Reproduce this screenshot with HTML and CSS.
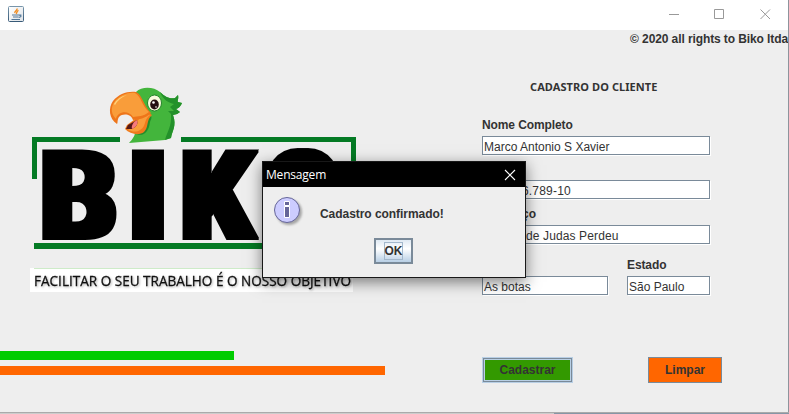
FILE: index.html
```html
<!DOCTYPE html>
<html lang="pt-BR">
<head>
<meta charset="utf-8">
<title>Biko</title>
<link rel="stylesheet" href="styles.css">
</head>
<body>
<main class="window">
  <header class="titlebar">
    <svg class="java" width="16" height="16" viewBox="0 0 16 16">
      <defs><linearGradient id="jb" x1="0" y1="0" x2="0" y2="1"><stop offset="0" stop-color="#7795ab"/><stop offset="1" stop-color="#385a78"/></linearGradient>
      <linearGradient id="jf" x1="0" y1="0" x2="1" y2="1"><stop offset="0" stop-color="#fff"/><stop offset="1" stop-color="#dfe3e7"/></linearGradient></defs>
      <rect x=".5" y=".5" width="15" height="15" rx="1" fill="url(#jf)" stroke="url(#jb)"/>
      <path d="M9.200 2.500C9.500 4.500 6.200 5 6.800 7M10.500 4.300C8.300 5.300 9.600 6.100 8 7.800" fill="none" stroke="#f08a1c" stroke-width="1.300"/>
      <path d="M4 9h7M5 11h5.500M3.500 13.500h8.500M11 9.200h1.800v1.500l-2 .8" fill="none" stroke="#54799a" stroke-width="1.200"/>
    </svg>
    <svg class="controls" width="102" height="12" viewBox="0 0 102 12" fill="none" stroke="#999">
      <path d="M0 6.500h10M45.500 1.500h9v9h-9zM91.500 1.500l9.500 9.500M101 1.500l-9.500 9.500"/>
    </svg>
  </header>
  <p class="copyright"><span>© 2020 all rights to Biko ltda</span></p>
  <div class="content">
    <section class="brand">
      <svg class="logo" width="385" height="300" viewBox="0 48 385 300">
        <defs>
          <filter id="heavy" filterUnits="userSpaceOnUse" x="20" y="130" width="350" height="130"><feMorphology operator="dilate" radius="5 1"/></filter>
        </defs>
        <g fill="#047a24">
          <path d="M32 137h88v5H37v37h-5zM181 137h175v112h-5V142H181zM34 243h322v6H34z"/>
        </g>
        <g class="wordmark" filter="url(#heavy)">
          <text transform="translate(41 239) scale(.940 1)">B</text>
          <text transform="translate(148 239) scale(1.040 1)" text-anchor="middle">I</text>
          <text transform="translate(181.500 239) scale(.900 1)">K</text>
          <text transform="translate(303 239) scale(.880 1)" text-anchor="middle">O</text>
        </g>
        <path d="M136 92C142 86 154 87 160 92C166 98 171 99 175 98L178 95C179 99 177 101 178 102L182 103Q180 108 176 109L180 112Q177 115 173 115C177 126 172 131 171 138L165 140L129 143Q135 137 135 132Z" fill="#43b53c"/>
        <path d="M160 92C166 98 171 99 175 98L178 95C179 99 177 101 178 102L182 103Q180 108 176 109L180 112Q177 115 173 115C177 126 172 131 171 138L165 140C167 132 172 126 171 114L168 111L174 111L170 107L174 104C169 103 163 100 160 92Z" fill="#23912a"/>
        <path d="M147 118C151 115 153 116 150 122C149 132 143 137 136 134Z" fill="#238c2b"/>
        <path d="M146 111L152 115C146 120 149 127 144 132C139 136 130 134 125 129L127 125Z" fill="#f07a1c"/>
        <path d="M146 113L150 115C143 120 147 126 140 130C136 133 131 131 128 130L137 121Z" fill="#f99d3a"/>
        <path d="M128 125L137 120Q139 126 132 129L126 129Z" fill="#541816"/>
        <path d="M134 122L137 120Q139 126 132 129Q131 126 134 122Z" fill="#f67a7b"/>
        <path d="M136 92C142 94 143 105 151 113C145 119 139 119 133 120C131 114 123 113 119 117C117 120 118 123 117 124C109 119 108 108 113 101C119 94 127 91 136 92Z" fill="#ee751a"/>
        <path d="M135 93C141 96 142 106 149 112C143 117 138 116 133 117C128 109 117 112 116 119C109 112 112 104 116 100C121 95 128 92 135 93Z" fill="#f99d3a"/>
        <path d="M114 104Q118 97 127 95Q119 98 115 105Z" fill="#ffd37b"/>
        <ellipse cx="154.500" cy="103" rx="7" ry="8" fill="#f9fbdc" stroke="#24842a"/>
        <ellipse cx="154.500" cy="104.500" rx="4.300" ry="5" fill="#251111"/>
        <circle cx="153.500" cy="102.500" r="1.300" fill="#fff"/><circle cx="156" cy="107" r=".8" fill="#fff"/>
        <path d="M30 268h323v24H30z" fill="#fff"/>
        <path d="M34 268.500h319" stroke="#cdebc8"/>
        <text class="tagline" x="34" y="286" textLength="317" lengthAdjust="spacingAndGlyphs">FACILITAR O SEU TRABALHO É O NOSSO OBJETIVO</text>
      </svg>
      <div class="stripe green"></div>
      <div class="stripe orange"></div>
    </section>
    <form class="form">
      <h1><span>CADASTRO DO CLIENTE</span></h1>
      <div class="group name"><label>Nome Completo</label><div class="field">Marco Antonio S Xavier</div></div>
      <div class="group cpf"><label>CPF</label><div class="field num">123.456.789-10</div></div>
      <div class="group address"><label>Endereço</label><div class="field wide"><span class="street">Rua on</span>de Judas Perdeu</div></div>
      <div class="pair">
        <div class="group"><label>Cidade</label><div class="field">As botas</div></div>
        <div class="group"><label>Estado</label><div class="field">São Paulo</div></div>
      </div>
      <div class="actions"><button type="button" class="save">Cadastrar</button><button type="button" class="clear">Limpar</button></div>
    </form>
  </div>
</main>
<div class="edge"></div>
<section class="dialog">
  <header><span>Mensagem</span>
    <svg width="12" height="12" viewBox="0 0 12 12" stroke="#fff" stroke-width="1.100"><path d="M1 1l10 10M11 1L1 11"/></svg>
  </header>
  <div class="message">
    <svg width="32" height="32" viewBox="0 0 32 32">
      <defs><filter id="sh" x="-20%" y="-20%" width="150%" height="150%"><feGaussianBlur stdDeviation="1.200"/></filter></defs>
      <circle cx="16" cy="16" r="13" fill="#888" opacity=".7" filter="url(#sh)"/>
      <circle cx="14" cy="14" r="12.500" fill="#ccccff" stroke="#666699"/>
      <path d="M11.500 5.500h5v4h-5zM11.500 10.500h5v11h-5z" fill="#666699" stroke="#fff"/>
    </svg>
    <p>Cadastro confirmado!</p>
  </div>
  <button type="button" class="ok"><span>OK</span></button>
</section>
</body>
</html>
```

FILE: styles.css
```css
* { box-sizing: border-box; }
body {
  margin: 0;
  width: 789px;
  height: 414px;
  overflow: hidden;
  background: #8d949c;
  color: #333;
  font: 12px "Liberation Sans", Arial, sans-serif;
}
p, h1 { margin: 0; }
.window {
  width: 788px;
  height: 412px;
  background: #eee;
  overflow: hidden;
}
.titlebar {
  height: 30px;
  padding: 0 17px 0 8px;
  display: flex;
  align-items: center;
  justify-content: space-between;
  background: #fff;
}
.java { margin-top: -2px; }
.controls { margin-top: -2px; }
.copyright {
  height: 18px;
  line-height: 18px;
  text-align: right;
  font-weight: bold;
  letter-spacing: -.1px;
}
.content { display: flex; height: 364px; }
.brand { width: 482px; }
.logo { display: block; }
.wordmark text {
  font: 900 124px Roboto, sans-serif;
  fill: #000;
}
.tagline {
  font: 14.500px "Open Sans", "Noto Sans", sans-serif;
  fill: #111;
  stroke: #111;
  stroke-width: .3px;
  filter: drop-shadow(1px 1px 1px rgba(0,0,0,.3));
}
.stripe { height: 9px; }
.green { width: 234px; margin-top: 3px; background: #00cc00; }
.orange { width: 385px; margin-top: 6px; background: #ff6600; }
.form { width: 240px; padding-top: 31px; }
h1 {
  height: 16px;
  margin-left: 48px;
  font: bold 11px/16px "Noto Sans", sans-serif;
  letter-spacing: .08px;
  white-space: nowrap;
}
label { display: block; height: 19px; line-height: 16px; font-weight: bold; letter-spacing: -.1px; }
.group { width: 228px; padding-bottom: 1px; }
.field {
  height: 19px;
  padding-left: 1px;
  background: #fff;
  border: 1px solid #7a8a99;
  box-shadow: 1px 1px 0 #fff;
  line-height: 20px;
  white-space: pre;
  overflow: hidden;
}
.num { letter-spacing: .2px; }
.wide { letter-spacing: .12px; }
.name { margin-top: 22px; }
.cpf { margin-top: 5px; }
.address { margin-top: 6px; }
.street { display: inline-block; width: 42px; }
.pair { display: grid; grid-template-columns: 126px 83px; gap: 19px; margin-top: 12px; }
.pair .group { width: auto; }
.actions { display: flex; gap: 75px; margin-top: 61px; }
button {
  padding: 0;
  height: 26px;
  color: #333;
  font: bold 12px "Liberation Sans", Arial, sans-serif;
}
.save {
  width: 91px;
  background: #339900;
  border: 1px solid #b8cfe5;
  box-shadow: inset 0 0 0 1px #7a8a99, inset 0 0 0 2px #b8cfe5;
}
.clear { width: 74px; background: #ff6600; border: 1px solid #7a8a99; }
.edge { height: 2px; background: linear-gradient(#aaa 50%, transparent 50%), linear-gradient(90deg, #ccc 554px, #8696a6 554px); }
.dialog {
  position: absolute;
  left: 262px;
  top: 161px;
  width: 264px;
  height: 117px;
  background: #eee;
  border: 1px solid #181818;
  box-shadow: 0 4px 14px rgba(0,0,0,.5);
}
.dialog header {
  height: 25px;
  padding: 0 9px 0 3px;
  display: flex;
  align-items: center;
  justify-content: space-between;
  background: #000;
  color: #fff;
  font: 12px "Open Sans", "Noto Sans", sans-serif;
  letter-spacing: -.2px;
}
.message { display: flex; height: 51px; padding: 9px 0 0 10px; }
.message p { margin: 10px 0 0 15px; font-weight: bold; line-height: 16px; letter-spacing: -.05px; }
.ok {
  display: flex;
  align-items: center;
  justify-content: center;
  width: 39px;
  margin: 0 0 0 111px;
  border: 2px solid #7a8a99;
  background: linear-gradient(#dfe9f3, #fff 40%, #b8cfe5);
}
.ok span { width: 19px; height: 18px; line-height: 17px; border: 1px solid #a3b8cc; display: flex; justify-content: center; }
```
